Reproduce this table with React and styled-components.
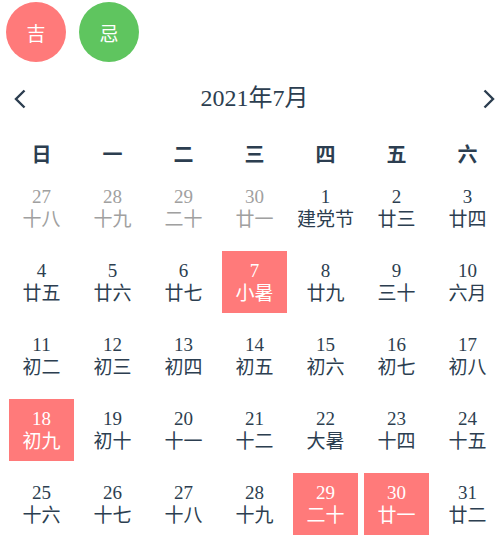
import React from "react";
import styled, { createGlobalStyle } from "styled-components";

const GlobalStyle = createGlobalStyle`
  body {
    margin: 0;
    background: #fff;
    font-family: "Liberation Serif", "Noto Sans CJK SC", serif;
    color: #2c3e50;
    overflow: hidden;
  }
`;

const Page = styled.div`
  padding: 2px 6px 0 6px;
`;

const TagRow = styled.div`
  display: flex;
  gap: 13px;
`;

const Tag = styled.div`
  width: 60px;
  height: 60px;
  border-radius: 50%;
  background: ${(p) => p.$color};
  color: #fff;
  font-size: 19px;
  display: flex;
  align-items: center;
  justify-content: center;
`;

const Header = styled.div`
  margin-top: 18px;
  height: 38px;
  display: flex;
  align-items: center;
  justify-content: space-between;
  padding-left: 8px;
`;

const Arrow = styled.button`
  border: none;
  background: none;
  padding: 0;
  width: 12px;
  height: 20px;
  display: flex;
  align-items: center;
  justify-content: center;
  cursor: pointer;
`;

const Title = styled.div`
  font-size: 24px;
  color: #2c3e50;
  margin-top: -7px;
`;

const Grid = styled.div`
  display: grid;
  grid-template-columns: repeat(7, 65px);
  column-gap: 6px;
  row-gap: 12px;
  margin-left: 3px;
`;

const WeekGrid = styled(Grid)`
  margin-top: 15px;
  height: 40px;
  padding-bottom: 4px;
  align-items: center;
`;

const WeekDay = styled.div`
  text-align: center;
  font-size: 20px;
  font-weight: bold;
  color: #2c3e50;
`;

const Cell = styled.div`
  height: 62px;
  display: flex;
  flex-direction: column;
  align-items: center;
  justify-content: center;
  background: ${(p) => (p.$active ? "#ff7a7a" : "transparent")};
  color: ${(p) => (p.$active ? "#fff" : p.$muted ? "#a0a0a0" : "#2c3e50")};
`;

const DayNum = styled.div`
  font-size: 19px;
  line-height: 23px;
`;

const Lunar = styled.div`
  font-size: 19px;
  line-height: 24px;
`;

const weekDays = ["日", "一", "二", "三", "四", "五", "六"];

const prevDays = [
  [27, "十八"],
  [28, "十九"],
  [29, "二十"],
  [30, "廿一"],
];

const lunar = [
  "建党节", "廿三", "廿四", "廿五", "廿六", "廿七", "小暑", "廿九", "三十", "六月",
  "初二", "初三", "初四", "初五", "初六", "初七", "初八", "初九", "初十", "十一",
  "十二", "大暑", "十四", "十五", "十六", "十七", "十八", "十九", "二十", "廿一", "廿二",
];

const marked = [7, 18, 29, 30];

const Chevron = ({ dir }) => (
  <svg width="12" height="20" viewBox="0 0 12 20">
    <path
      d={dir === "left" ? "M10.5 1.5 L2 10 L10.5 18.5" : "M1.5 1.5 L10 10 L1.5 18.5"}
      fill="none"
      stroke="#2c3e50"
      strokeWidth="2.4"
    />
  </svg>
);

const App = () => {
  const days = [
    ...prevDays.map(([d, l]) => ({ day: d, lunar: l, muted: true })),
    ...lunar.map((l, i) => ({ day: i + 1, lunar: l, active: marked.includes(i + 1) })),
  ];

  return (
    <>
      <GlobalStyle />
      <Page>
        <TagRow>
          <Tag $color="#ff7a7a">吉</Tag>
          <Tag $color="#5fc55f">忌</Tag>
        </TagRow>
        <Header>
          <Arrow><Chevron dir="left" /></Arrow>
          <Title>2021年7月</Title>
          <Arrow><Chevron dir="right" /></Arrow>
        </Header>
        <WeekGrid>
          {weekDays.map((w) => (
            <WeekDay key={w}>{w}</WeekDay>
          ))}
        </WeekGrid>
        <Grid>
          {days.map((d, i) => (
            <Cell key={i} $active={d.active} $muted={d.muted}>
              <DayNum>{d.day}</DayNum>
              <Lunar>{d.lunar}</Lunar>
            </Cell>
          ))}
        </Grid>
      </Page>
    </>
  );
};

export default App;
